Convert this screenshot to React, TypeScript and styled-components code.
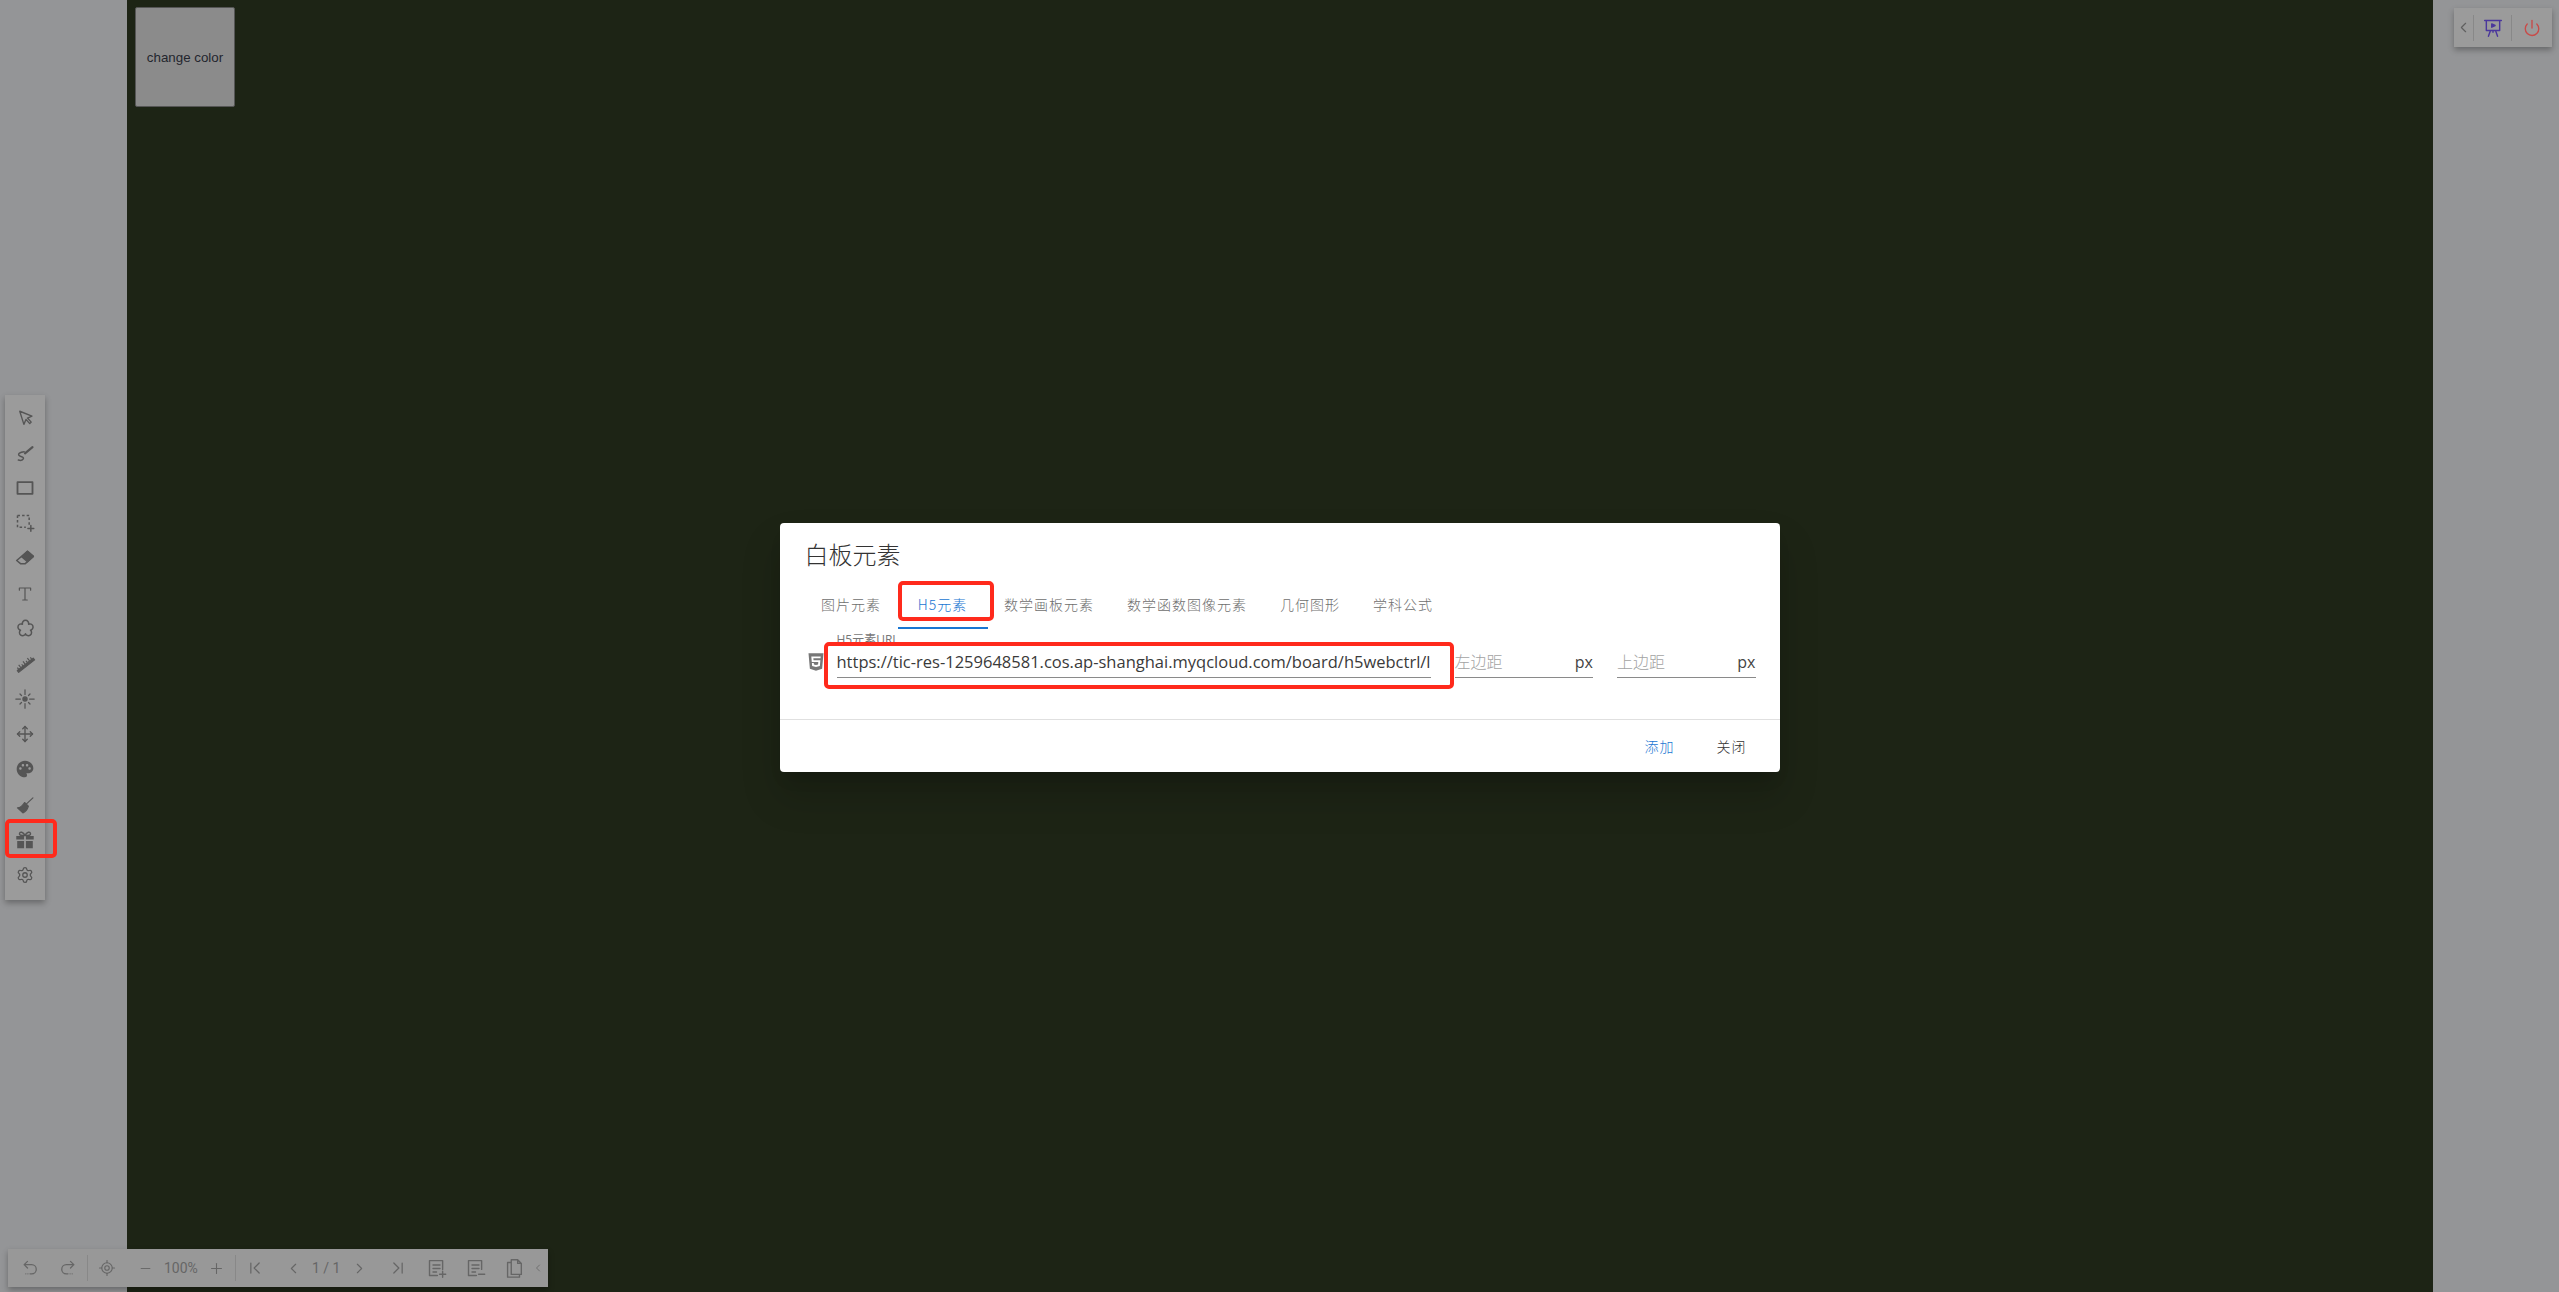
import { ReactNode } from 'react';
import styled, { createGlobalStyle } from 'styled-components';
import { ChevronLeft, ChevronRight, LocateFixed, Minus, Move, Plus, Power, Settings } from 'lucide-react';
import { FaHtml5 } from 'react-icons/fa';
import { MdPalette } from 'react-icons/md';

const CJK = `'Noto Sans CJK SC', 'Open Sans', sans-serif`;

const GlobalStyle = createGlobalStyle`
    html, body { margin: 0; padding: 0; height: 100%; overflow: hidden; }
    body { font-family: 'Open Sans', 'Noto Sans CJK SC', sans-serif; }
`;

const Page = styled.div`
    position: relative;
    display: grid;
    grid-template-columns: 127px 1fr 126px;
    height: 100vh;
    background: #949597;
    overflow: hidden;
`;
const Board = styled.main`
    grid-column: 2;
    background: #1d2415;
    padding: 7px 8px;
`;
const ChangeColor = styled.button`
    display: block;
    width: 100px;
    height: 100px;
    padding: 0;
    border: 1px solid #555;
    border-radius: 2px;
    background: #8b8b8b;
    color: #23262e;
    font: 13.33px 'Liberation Sans', Arial, sans-serif;
`;

const Float = styled.div`
    position: absolute;
    background: #9b9b9b;
    box-shadow: 0 3px 6px rgba(0, 0, 0, 0.3);
    display: flex;
    color: #555;
`;
const SideBar = styled(Float)`
    left: 5px;
    top: 395px;
    width: 40px;
    padding: 5px 0 7px;
    flex-direction: column;
`;
const ToolButton = styled.div`
    position: relative;
    height: 35.2px;
    display: flex;
    align-items: center;
    justify-content: center;
`;
const BottomBar = styled(Float)`
    left: 8px;
    top: 1249px;
    width: 540px;
    height: 38px;
    padding-left: 3px;
    box-sizing: border-box;
    align-items: center;
    color: #666;
    background: #989898;
`;
const BarButton = styled.div<{ $width?: number }>`
    flex: none;
    width: ${p => p.$width ?? 38}px;
    display: flex;
    align-items: center;
    justify-content: center;
`;
const BarText = styled.span<{ $width: number }>`
    flex: none;
    width: ${p => p.$width}px;
    text-align: center;
    font: 14px Roboto, sans-serif;
    color: #666;
    white-space: nowrap;
`;
const BarDivider = styled.i`
    flex: none;
    width: 1px;
    height: 26px;
    background: #888;
`;
const TopBar = styled(Float)`
    right: 7px;
    top: 8px;
    height: 39px;
    align-items: center;
`;
const TopButton = styled.div<{ $width: number; $color: string }>`
    width: ${p => p.$width}px;
    display: flex;
    align-items: center;
    justify-content: center;
    color: ${p => p.$color};
`;

const Backdrop = styled.div`
    position: absolute;
    inset: 0;
    padding-top: 3px;
    box-sizing: border-box;
    display: flex;
    align-items: center;
    justify-content: center;
`;
const Dialog = styled.section`
    width: 1000px;
    background: #fff;
    border-radius: 4px;
    box-shadow: 0 11px 15px -7px rgba(0, 0, 0, 0.2), 0 24px 38px 3px rgba(0, 0, 0, 0.14);
`;
const Title = styled.h2`
    margin: 0;
    padding: 13px 25px 9px;
    font: 300 24px/36px ${CJK};
    color: #333;
`;
const Tabs = styled.div`
    display: flex;
    height: 48px;
    padding-left: 25px;
`;
const Tab = styled.div<{ $active?: boolean }>`
    position: relative;
    box-sizing: border-box;
    min-width: 90px;
    padding: 0 16.5px;
    display: flex;
    align-items: center;
    justify-content: center;
    white-space: nowrap;
    font: 300 14px ${CJK};
    letter-spacing: 1px;
    color: ${p => (p.$active ? '#1976d2' : '#6e6e6e')};
    border-bottom: 2px solid ${p => (p.$active ? '#1976d2' : 'transparent')};
`;
const Highlight = styled.span`
    position: absolute;
    box-sizing: border-box;
    border: 4px solid #ff2a1c;
    border-radius: 5px;
    pointer-events: none;
    z-index: 2;
`;
const TabHighlight = styled(Highlight)`
    left: 0;
    top: 0;
    width: 96px;
    height: 40px;
`;
const UrlHighlight = styled(Highlight)`
    left: -13px;
    top: 8px;
    right: -23px;
    height: 47px;
`;
const GiftHighlight = styled(Highlight)`
    left: 0;
    top: -3px;
    width: 52px;
    height: 39px;
`;
const Fields = styled.div`
    display: flex;
    align-items: flex-end;
    gap: 24px;
    padding: 5px 24px 41px;
`;
const TypeIcon = styled.div`
    flex: none;
    width: 24px;
    height: 32px;
    margin-right: -15px;
    color: #777;
    display: flex;
    align-items: flex-start;
    justify-content: center;
    padding-top: 6px;
    box-sizing: border-box;
`;
const Field = styled.div<{ $grow?: boolean }>`
    position: relative;
    flex: ${p => (p.$grow ? '1' : 'none')};
    width: ${p => (p.$grow ? 'auto' : '138.5px')};
`;
const FieldLabel = styled.label`
    display: block;
    height: 12px;
    line-height: 12px;
    font-size: 12px;
    color: #777;
    white-space: nowrap;
`;
const InputLine = styled.div`
    display: flex;
    align-items: center;
    height: 32px;
    box-sizing: border-box;
    border-bottom: 1px solid #8a8a8a;
`;
const Input = styled.input`
    flex: 1;
    min-width: 0;
    border: 0;
    outline: 0;
    padding: 0;
    background: transparent;
    font: 16.5px 'Open Sans', ${CJK};
    color: #3a3a3a;
    &::placeholder { color: #a3a3a3; font: 300 16px ${CJK}; }
`;
const Unit = styled.span`
    font-size: 16px;
    color: #444;
`;
const Actions = styled.footer`
    display: flex;
    justify-content: flex-end;
    gap: 8px;
    height: 52px;
    padding-right: 16px;
    align-items: center;
    border-top: 1px solid #e0e0e0;
`;
const ActionButton = styled.button<{ $primary?: boolean }>`
    width: 64px;
    height: 36px;
    padding: 0;
    border: 0;
    background: transparent;
    font: 300 14px ${CJK};
    letter-spacing: 1px;
    color: ${p => (p.$primary ? '#1976d2' : '#333')};
`;

const Svg = ({ size = 18, width = 1.8, children }: { size?: number; width?: number; children: ReactNode }) => (
    <svg width={size} height={size} viewBox="0 0 24 24" fill="none" stroke="currentColor" strokeWidth={width} strokeLinecap="round" strokeLinejoin="round">
        {children}
    </svg>
);

const tools: { id: string; icon: ReactNode }[] = [
    { id: 'cursor', icon: <Svg><path d="M5 3l5.500 17.500 2.800-6.600 5 5.600 2-2-5-5.400 6-2.700z" /></Svg> },
    { id: 'curve', icon: <Svg size={20}><path d="M21 5l-9 7.500" strokeWidth={2.6} /><path d="M11 10.500c-5 .5-8 2.500-6 4.500s6 1.500 5 4-4 2-6 1.500" /></Svg> },
    { id: 'rect', icon: <Svg size={20} width={2.2}><rect x="3" y="5" width="18" height="14" strokeLinecap="butt" /></Svg> },
    {
        id: 'select',
        icon: (
            <Svg size={20}>
                <path d="M3 3h14v11M3 3v14h10" strokeDasharray="3 2.500" strokeLinecap="butt" strokeLinejoin="miter" />
                <path d="M19 15v7M15.500 18.500h7" />
            </Svg>
        ),
    },
    { id: 'eraser', icon: <Svg size={20}><path d="M15 4l7 6-10 9H7l-5-4z" /><path d="M15 4l7 6-7 6.500-7-6z" fill="currentColor" /></Svg> },
    { id: 'text', icon: <Svg width={1.6}><path d="M4.500 7V4h15v3M12 4v16M9 20h6" /></Svg> },
    {
        id: 'puzzle',
        icon: (
            <Svg size={21} width={1.7}>
                <path d="M8.500 7.100A3.600 3.600 0 1 1 15.500 7.100A3.600 3.600 0 1 1 17.700 13.900A3.600 3.600 0 1 1 12 18A3.600 3.600 0 1 1 6.300 13.900A3.600 3.600 0 1 1 8.500 7.100z" />
            </Svg>
        ),
    },
    {
        id: 'ruler',
        icon: (
            <Svg size={22} width={1.3}>
                <g transform="rotate(-38 12 12)" strokeLinecap="butt">
                    <rect x="1" y="12.500" width="22" height="2.400" fill="currentColor" />
                    <path d="M3 12.500V10M6 12.500V8.500M9 12.500V10M12 12.500V8.500M15 12.500V10M18 12.500V8.500M21 12.500V10" />
                </g>
            </Svg>
        ),
    },
    {
        id: 'laser',
        icon: (
            <Svg size={20} width={1.5}>
                <circle cx="12" cy="12" r="2.500" fill="currentColor" />
                <path d="M12 1v5.500M12 17.500V23M1 12h5.500M17.500 12H23M6 6l1.800 1.800M16.200 16.200L18 18M18 6l-1.800 1.800M7.800 16.200L6 18" />
            </Svg>
        ),
    },
    { id: 'move', icon: <Move size={18} strokeWidth={1.8} /> },
    { id: 'palette', icon: <MdPalette size={20} /> },
    {
        id: 'broom',
        icon: (
            <Svg size={20} width={1.4}>
                <path d="M21.500 3.500L13.500 11" />
                <path d="M11.500 9L16 13.500C15 17 12.500 20 9.500 21.500L3 15.500C7 15 9 13 11.500 9z" fill="currentColor" />
            </Svg>
        ),
    },
    {
        id: 'gift',
        icon: (
            <Svg size={22} width={1.6}>
                <path d="M12 7C10 3 6.500 2.500 6 5s3 2 6 2c3 0 6.500.5 6-2s-4-2-6 2z" />
                <path d="M2.500 7.500h8.500v4H2.500zM13 7.500h8.500v4H13zM3.500 13H11v8H3.500zM13 13h7.500v8H13z" fill="currentColor" stroke="none" />
            </Svg>
        ),
    },
    { id: 'settings', icon: <Settings size={18} strokeWidth={1.7} /> },
];

const Skip = ({ flip }: { flip?: boolean }) => (
    <Svg size={20} width={1.5}>
        <g transform={flip ? 'matrix(-1 0 0 1 24 0)' : undefined}>
            <path d="M7 6v12M17 6l-6 6 6 6" />
        </g>
    </Svg>
);
const Undo = ({ flip }: { flip?: boolean }) => (
    <Svg size={20} width={1.5}>
        <g transform={flip ? 'matrix(-1 0 0 1 24 0)' : undefined}>
            <path d="M9 4L5 8l4 4M5 8h9a5 5 0 0 1 0 11h-2" />
            <path d="M7 19h.01M9.500 19h.01" />
        </g>
    </Svg>
);
const Note = ({ mark }: { mark: 'add' | 'remove' }) => (
    <Svg size={21} width={1.6}>
        <path d="M13 20H4V3h15v10M8 8h8M8 12h8M8 16h4" />
        <path d={mark === 'add' ? 'M19 15v7M15.500 18.500h7' : 'M15.500 18.500h7'} />
    </Svg>
);

export default function App() {
    return (
        <Page>
            <GlobalStyle />
            <Board>
                <ChangeColor>change color</ChangeColor>
            </Board>

            <SideBar>
                {tools.map(tool => (
                    <ToolButton key={tool.id}>
                        {tool.icon}
                        {tool.id === 'gift' ? <GiftHighlight /> : null}
                    </ToolButton>
                ))}
            </SideBar>

            <BottomBar>
                <BarButton><Undo /></BarButton>
                <BarButton><Undo flip /></BarButton>
                <BarDivider />
                <BarButton><LocateFixed size={18} strokeWidth={1.5} /></BarButton>
                <BarButton><Minus size={15} strokeWidth={1.5} /></BarButton>
                <BarText $width={33}>100%</BarText>
                <BarButton><Plus size={17} strokeWidth={1.5} /></BarButton>
                <BarDivider />
                <BarButton><Skip /></BarButton>
                <BarButton><ChevronLeft size={17} strokeWidth={1.6} /></BarButton>
                <BarText $width={28}>1 / 1</BarText>
                <BarButton><ChevronRight size={17} strokeWidth={1.6} /></BarButton>
                <BarButton $width={39}><Skip flip /></BarButton>
                <BarButton $width={39}><Note mark="add" /></BarButton>
                <BarButton $width={39}><Note mark="remove" /></BarButton>
                <BarButton $width={37}>
                    <Svg size={22} width={1.5}>
                        <path d="M9 3h7l4 4v12H9zM16 3v4h4M9 6H5v16h13v-3" />
                    </Svg>
                </BarButton>
                <BarButton $width={12}><ChevronLeft size={16} strokeWidth={1.6} /></BarButton>
            </BottomBar>

            <TopBar>
                <TopButton $width={19} $color="#5f5f5f"><ChevronLeft size={17} strokeWidth={1.6} /></TopButton>
                <BarDivider />
                <TopButton $width={37} $color="#4a379c">
                    <Svg size={20} width={1.7}>
                        <path d="M2 3h20M4 3v12h16V3M9 15l-2.500 7M15 15l2.500 7M12 15v2" />
                        <path d="M10.500 7l4 2-4 2z" fill="currentColor" />
                    </Svg>
                </TopButton>
                <BarDivider />
                <TopButton $width={40} $color="#c94a48"><Power size={18} strokeWidth={1.8} /></TopButton>
            </TopBar>

            <Backdrop>
                <Dialog>
                    <Title>白板元素</Title>
                    <Tabs>
                        <Tab>图片元素</Tab>
                        <Tab $active>H5元素<TabHighlight /></Tab>
                        <Tab>数学画板元素</Tab>
                        <Tab>数学函数图像元素</Tab>
                        <Tab>几何图形</Tab>
                        <Tab>学科公式</Tab>
                    </Tabs>
                    <Fields>
                        <TypeIcon><FaHtml5 size={20} /></TypeIcon>
                        <Field $grow>
                            <FieldLabel>H5元素URL</FieldLabel>
                            <InputLine>
                                <Input readOnly value="https://tic-res-1259648581.cos.ap-shanghai.myqcloud.com/board/h5webctrl/l" />
                            </InputLine>
                            <UrlHighlight />
                        </Field>
                        <Field>
                            <InputLine>
                                <Input readOnly placeholder="左边距" />
                                <Unit>px</Unit>
                            </InputLine>
                        </Field>
                        <Field>
                            <InputLine>
                                <Input readOnly placeholder="上边距" />
                                <Unit>px</Unit>
                            </InputLine>
                        </Field>
                    </Fields>
                    <Actions>
                        <ActionButton $primary>添加</ActionButton>
                        <ActionButton>关闭</ActionButton>
                    </Actions>
                </Dialog>
            </Backdrop>
        </Page>
    );
}
